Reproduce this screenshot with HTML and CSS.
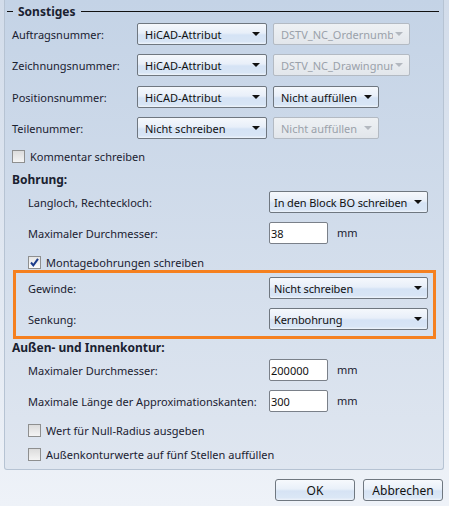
FILE: index.html
```html
<!DOCTYPE html>
<html lang="de">
<head>
    <meta charset="UTF-8">
    <title>Sonstiges</title>
    <link rel="stylesheet" href="styles.css">
</head>
<body>
    <div class="panel">
        <div class="legend">
            <span class="dash"></span>
            <span class="legend-title">Sonstiges</span>
            <span class="rule"></span>
        </div>

        <div class="row m4">
            <span class="lbl">Auftragsnummer:</span>
            <div class="combo w-main"><span class="val">HiCAD-Attribut</span><i class="arrow"></i></div>
            <div class="combo w-wide disabled"><span class="val">DSTV_NC_Ordernumb</span><i class="arrow"></i></div>
        </div>
        <div class="row m9">
            <span class="lbl">Zeichnungsnummer:</span>
            <div class="combo w-main"><span class="val">HiCAD-Attribut</span><i class="arrow"></i></div>
            <div class="combo w-wide disabled"><span class="val">DSTV_NC_Drawingnur</span><i class="arrow"></i></div>
        </div>
        <div class="row m10">
            <span class="lbl">Positionsnummer:</span>
            <div class="combo w-main"><span class="val">HiCAD-Attribut</span><i class="arrow"></i></div>
            <div class="combo w-small"><span class="val">Nicht auffüllen</span><i class="arrow"></i></div>
        </div>
        <div class="row m9">
            <span class="lbl">Teilenummer:</span>
            <div class="combo w-main"><span class="val">Nicht schreiben</span><i class="arrow"></i></div>
            <div class="combo w-small disabled"><span class="val">Nicht auffüllen</span><i class="arrow"></i></div>
        </div>

        <div class="check m9">
            <span class="box"></span>Kommentar schreiben
        </div>

        <div class="heading m8">Bohrung:</div>
        <div class="row sub m3">
            <span class="lbl-sub">Langloch, Rechteckloch:</span>
            <div class="combo w-long"><span class="val">In den Block BO schreiben</span><i class="arrow"></i></div>
        </div>
        <div class="row sub m9">
            <span class="lbl-sub">Maximaler Durchmesser:</span>
            <input class="num" type="text" value="38">
            <span class="unit">mm</span>
        </div>
        <div class="check sub m10">
            <span class="box checked">
                <svg width="11" height="11" viewBox="0 0 11 11"><path d="M2 5.5 L4.3 8.3 L9 1.8" fill="none" stroke="#1b3b8a" stroke-width="2"/></svg>
            </span>Montagebohrungen schreiben
        </div>

        <div class="marked">
            <div class="row">
                <span class="lbl-sub">Gewinde:</span>
                <div class="combo w-long"><span class="val">Nicht schreiben</span><i class="arrow"></i></div>
            </div>
            <div class="row m9">
                <span class="lbl-sub">Senkung:</span>
                <div class="combo w-long"><span class="val">Kernbohrung</span><i class="arrow"></i></div>
            </div>
        </div>

        <div class="heading m1">Außen- und Innenkontur:</div>
        <div class="row sub m3">
            <span class="lbl-sub">Maximaler Durchmesser:</span>
            <input class="num" type="text" value="200000">
            <span class="unit">mm</span>
        </div>
        <div class="row sub m9">
            <span class="lbl-sub">Maximale Länge der Approximationskanten:</span>
            <input class="num" type="text" value="300">
            <span class="unit">mm</span>
        </div>
        <div class="check sub m10">
            <span class="box"></span>Wert für Null-Radius ausgeben
        </div>
        <div class="check sub m8">
            <span class="box"></span>Außenkonturwerte auf fünf Stellen auffüllen
        </div>
    </div>

    <div class="footer">
        <button class="btn">OK</button>
        <button class="btn">Abbrechen</button>
    </div>
</body>
</html>
```

FILE: styles.css
```css
body {
    margin: 0;
    height: 506px;
    font-family: "Noto Sans", sans-serif;
    font-size: 11px;
    color: #1a2130;
    background: linear-gradient(#d2dcea, #eef2f8);
    overflow: hidden;
}

.panel {
    box-sizing: border-box;
    width: 440px;
    height: 470px;
    margin-left: 4px;
    padding: 4px 4px 0 7px;
    border: 1px solid #b6c3d3;
    border-top: none;
    border-radius: 0 0 3px 3px;
    background: linear-gradient(#c4d3e6, #dfe6f0);
}

/* group title with a line */
.legend {
    display: flex;
    align-items: center;
    height: 15px;
    margin-left: -5px;
}

.dash {
    width: 6px;
    height: 1px;
    background: #111;
}

.legend-title {
    margin: 0 5px;
    font-weight: bold;
    font-size: 12px;
}

.rule {
    flex: 1;
    height: 1px;
    background: #111;
}

.m1 { margin-top: 1px; }
.m3 { margin-top: 3px; }
.m4 { margin-top: 4px; }
.m8 { margin-top: 8px; }
.m9 { margin-top: 9px; }
.m10 { margin-top: 10px; }

.row {
    display: flex;
    align-items: center;
    height: 22px;
}

.sub {
    margin-left: 16px;
}

.lbl {
    width: 125px;
}

.lbl-sub {
    width: 241px;
    white-space: nowrap;
}

.heading {
    height: 16px;
    line-height: 16px;
    font-weight: bold;
    font-size: 12px;
}

/* combo boxes */
.combo {
    box-sizing: border-box;
    display: flex;
    align-items: center;
    height: 22px;
    padding: 0 6px 0 7px;
    border: 1px solid #6f7780;
    border-radius: 2px;
    background: linear-gradient(#f5f8fc, #e8eff9 45%, #d5e3f5 55%, #d8e5f5 88%, #eef4fb);
    color: #111;
}

.combo + .combo {
    margin-left: 6px;
}

.val {
    flex: 1;
    overflow: hidden;
    white-space: nowrap;
}

.arrow {
    width: 0;
    height: 0;
    margin-left: 2px;
    border-left: 4px solid transparent;
    border-right: 4px solid transparent;
    border-top: 4px solid #111;
}

.combo.disabled {
    border-color: #b3bac3;
    background: linear-gradient(#eef1f4, #e2e6eb);
    color: #9aa1aa;
}

.combo.disabled .arrow {
    border-top-color: #b3b8bf;
}

.w-main { width: 130px; }
.w-wide { width: 137px; }
.w-small { width: 106px; }

.w-long {
    width: 159px;
    padding: 0 5px 0 4px;
    letter-spacing: -0.1px;
}

.w-long .arrow {
    margin-left: 1px;
}

.num {
    box-sizing: border-box;
    width: 59px;
    height: 22px;
    margin: 0;
    padding: 0 1px;
    border: 1px solid #7a8089;
    border-radius: 2px;
    background: #fff;
    font: inherit;
    color: #111;
}

.unit {
    margin: -2px 0 0 9px;
}

/* check boxes */
.check {
    display: flex;
    align-items: center;
    height: 16px;
}

.box {
    box-sizing: border-box;
    display: flex;
    align-items: center;
    justify-content: center;
    width: 13px;
    height: 13px;
    margin-right: 5px;
    border: 1px solid #8e8f8f;
    background: linear-gradient(#dcdcdc, #f4f4f4);
}

.box.checked {
    background: linear-gradient(#e6e6e6, #fbfbfb);
}

/* highlighted block */
.marked {
    box-sizing: border-box;
    width: 423px;
    margin-left: 1px;
    padding: 4px 0 6px 12px;
    border: 3px solid #f5801f;
}

.footer {
    display: flex;
    justify-content: flex-end;
    gap: 8px;
    margin-top: 9px;
    padding-right: 6px;
}

.btn {
    box-sizing: border-box;
    width: 80px;
    height: 22px;
    border: 1px solid #6f7780;
    border-radius: 3px;
    background: linear-gradient(#f6f9fd, #e9f0f9 45%, #d6e3f4 55%, #dbe7f6 88%, #eef3fa);
    font-family: "Noto Sans", sans-serif;
    font-size: 12px;
    color: #111;
}
```
